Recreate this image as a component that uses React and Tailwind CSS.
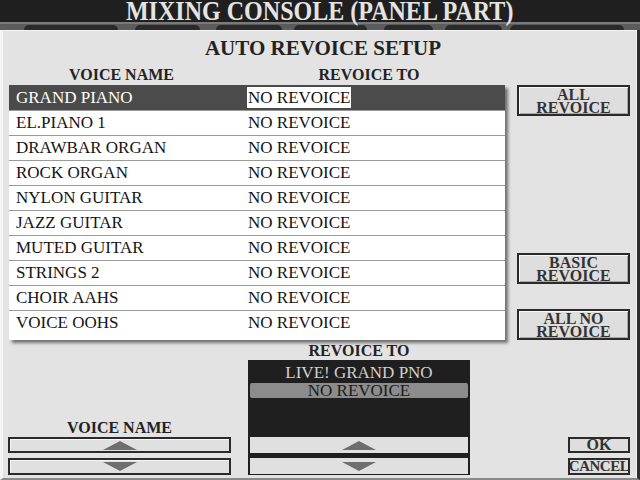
import React from "react";

const voices = [
  "GRAND PIANO",
  "EL.PIANO 1",
  "DRAWBAR ORGAN",
  "ROCK ORGAN",
  "NYLON GUITAR",
  "JAZZ GUITAR",
  "MUTED GUITAR",
  "STRINGS 2",
  "CHOIR AAHS",
  "VOICE OOHS",
];

const tabs = [
  { w: "w-[94px]", ml: "ml-[24px]" },
  { w: "w-[65px]", ml: "ml-[17px]" },
  { w: "w-[66px]", ml: "ml-[16px]" },
  { w: "w-[73px]", ml: "ml-[12px]" },
  { w: "w-[49px]", ml: "ml-[17px]" },
  { w: "w-[57px]", ml: "ml-[12px]" },
  { w: "w-[114px]", ml: "ml-[8px]" },
];

function Arrow({ down }) {
  return (
    <svg width="34" height="9" viewBox="0 0 34 9">
      {down ? (
        <polygon points="0,0 34,0 17,9" fill="#6e6e6e" />
      ) : (
        <polygon points="0,9 34,9 17,0" fill="#6e6e6e" />
      )}
    </svg>
  );
}

function SideButton({ lines }) {
  return (
    <div className="flex h-[31px] w-[113px] flex-col items-center justify-center border-2 border-[#2a2a2a] bg-[#dedede] shadow-[inset_1px_1px_0_#f6f6f6,inset_-1px_-1px_0_#a8a8a8]">
      {lines.map((l) => (
        <span key={l} className="h-[13px] text-[16px] font-bold leading-[13px] text-[#333]">
          {l}
        </span>
      ))}
    </div>
  );
}

function ArrowButton({ down, className }) {
  return (
    <div
      className={`flex items-center justify-center border-2 border-[#2a2a2a] bg-[#e0e0e0] shadow-[inset_1px_1px_0_#f6f6f6] ${className}`}
    >
      <Arrow down={down} />
    </div>
  );
}

export default function App() {
  return (
    <div
      className="flex h-[480px] w-[640px] flex-col overflow-hidden bg-[#1f1f1f]"
      style={{ fontFamily: '"Liberation Serif", "Times New Roman", serif' }}
    >
      {/* header */}
      <div className="flex h-[22px] items-center justify-center">
        <span className="scale-x-[0.89] whitespace-nowrap text-[27px] font-bold leading-[22px] text-[#e4e4e4]">
          MIXING CONSOLE (PANEL PART)
        </span>
      </div>

      {/* tab strip */}
      <div className="flex h-[8px] items-end border-t-2 border-[#7a7a7a] bg-[#5c5c5c]">
        {tabs.map((t, i) => (
          <div key={i} className={`h-[5px] rounded-t-[6px] bg-[#2a2a2a] ${t.w} ${t.ml}`} />
        ))}
      </div>

      {/* dialog */}
      <div className="flex min-h-0 flex-1 flex-col border-b-2 border-l-[3px] border-r-[3px] border-b-[#8a8a8a] border-l-[#f4f4f4] border-r-[#2e2e2e] bg-[#e3e3e3] pl-[6px] shadow-[inset_-1px_0_0_#f4f4f4,inset_0_1px_0_#f4f4f4]">
        <div className="mt-[6px] flex h-[26px] items-center justify-center">
          <span className="text-[21px] font-bold text-[#222]">AUTO REVOICE SETUP</span>
        </div>

        <div className="mt-[4px] flex h-[18px] items-center text-[16px] font-bold leading-none text-[#222]">
          <span className="w-[225px] text-center">VOICE NAME</span>
          <span className="ml-[24px] w-[222px] text-center">REVOICE TO</span>
        </div>

        <div className="mt-[1px] flex">
          {/* list */}
          <div className="w-[496px] bg-white shadow-[3px_3px_3px_rgba(0,0,0,0.5)]">
            {voices.map((v, i) => (
              <div
                key={v}
                className={`flex h-[25px] items-center text-[17px] leading-none ${
                  i === 0 ? "bg-[#4b4b4b] text-white" : "border-t border-[#9a9a9a] pb-px text-[#141414]"
                }`}
              >
                <span className="w-[238px] pl-[7px]">{v}</span>
                <span className={`px-px py-[2px] ${i === 0 ? "bg-white text-[#111]" : ""}`}>
                  NO REVOICE
                </span>
              </div>
            ))}
          </div>

          {/* right buttons */}
          <div className="ml-[12px] flex flex-col">
            <SideButton lines={["ALL", "REVOICE"]} />
            <div className="mt-[137px]">
              <SideButton lines={["BASIC", "REVOICE"]} />
            </div>
            <div className="mt-[25px]">
              <SideButton lines={["ALL NO", "REVOICE"]} />
            </div>
          </div>
        </div>

        {/* bottom section */}
        <div className="mb-[3px] mt-auto flex items-end">
          <div className="ml-[-1px] flex w-[223px] flex-col">
            <span className="mb-[1px] text-center text-[16px] font-bold leading-[16px] text-[#222]">
              VOICE NAME
            </span>
            <ArrowButton className="h-[16px]" />
            <ArrowButton down className="mt-[5px] h-[17px]" />
          </div>

          <div className="ml-[17px] flex w-[222px] flex-col">
            <span className="mb-[1px] text-center text-[16px] font-bold leading-[17px] text-[#222]">
              REVOICE TO
            </span>
            <div className="flex h-[115px] flex-col bg-[#1f1f1f] px-[2px] pb-px">
              <span className="mt-[3px] text-center text-[17px] leading-[19px] text-[#d0d0d0]">
                LIVE! GRAND PNO
              </span>
              <span className="mt-px rounded-[2px] bg-[#8c8c8c] text-center text-[17px] leading-[15px] text-[#1a1a1a]">
                NO REVOICE
              </span>
              <div className="flex-1" />
              <div className="flex h-[16px] items-center justify-center bg-[#e0e0e0]">
                <Arrow />
              </div>
              <div className="mt-[5px] flex h-[16px] items-center justify-center bg-[#e0e0e0]">
                <Arrow down />
              </div>
            </div>
          </div>

          <div className="ml-[98px] flex w-[62px] flex-col">
            <div className="flex h-[16px] items-center justify-center border-2 border-[#2a2a2a] bg-[#dedede] text-[16px] font-bold leading-none text-[#333]">
              OK
            </div>
            <div className="mt-[5px] flex h-[17px] items-center justify-center border-2 border-[#2a2a2a] bg-[#dedede] text-[15px] font-bold leading-none tracking-[-0.5px] text-[#333]">
              CANCEL
            </div>
          </div>
        </div>
      </div>
    </div>
  );
}
